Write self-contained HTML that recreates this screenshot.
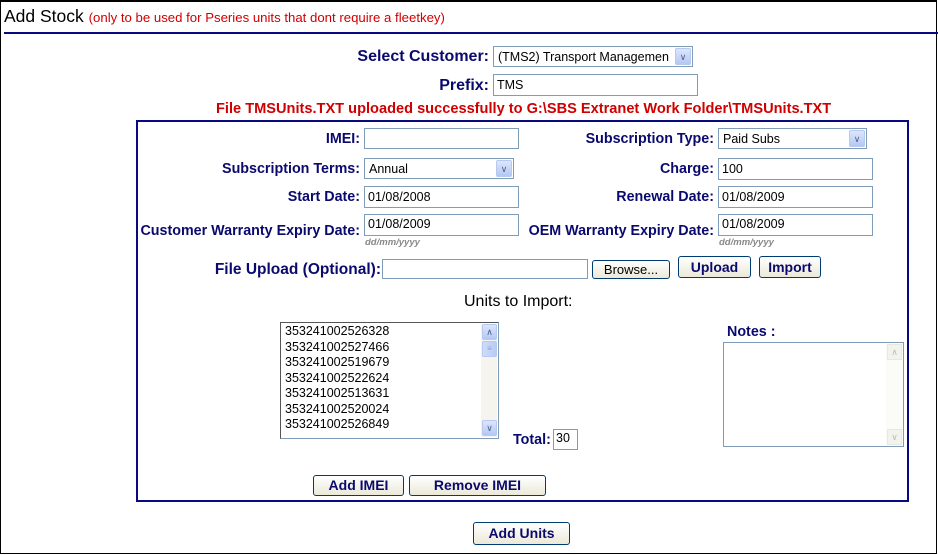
<!DOCTYPE html>
<html><head><style>
*{box-sizing:border-box;margin:0;padding:0}
body{width:938px;height:555px;background:#fff;font-family:"Liberation Sans",Arial,sans-serif;position:relative;overflow:hidden}
.a{position:absolute;white-space:nowrap}
.outer{left:0;top:0;width:937px;height:554px;border:1px solid #000;border-top:2px solid #000}
.lbl{color:#0a0a6e;font-weight:bold;font-size:14.3px;text-align:right}
.inp{border:1px solid #7f9db9;background:#fff;font-size:12.5px;padding:3px 3px 2px;color:#000;line-height:15px}
.sel{border:1px solid #7f9db9;background:#fff;font-size:12.5px;padding:3px 4px 2px;color:#000;line-height:15px}
.sel .ar{position:absolute;right:1px;top:1px;bottom:1px;width:16px;background:linear-gradient(#dce6fb,#b4c8f5);border:1px solid #b7c9f0;border-radius:2px;color:#4d6185;font-size:9px;text-align:center;line-height:17px;padding:0}
.btn{border:1px solid #003c74;border-radius:3px;background:linear-gradient(#fff,#ece9d8);color:#0a0a6e;font-weight:bold;font-size:14px;text-align:center}
.btn2{border:1px solid #003c74;border-radius:3px;background:linear-gradient(#fff,#ece9d8);color:#000;font-size:13px;text-align:center}
.hint{color:#888;font-size:9.5px;font-weight:bold;font-style:italic}
</style></head><body>
<div class="a outer"></div>
<div class="a" style="left:4px;top:6px;font-size:17.5px;color:#000">Add Stock <span style="font-size:13.2px;color:#d00000">(only to be used for Pseries units that dont require a fleetkey)</span></div>
<div class="a" style="left:4px;top:32px;width:934px;height:2px;background:#0a0a80"></div>

<div class="a lbl" style="right:449px;top:48px;font-size:16px">Select Customer:</div>
<div class="a sel" style="left:493px;top:46px;width:200px;height:21px">(TMS2) Transport Managemen<div class="ar">&#8744;</div></div>
<div class="a lbl" style="right:449px;top:77px;font-size:16px">Prefix:</div>
<div class="a inp" style="left:493px;top:74px;width:205px;height:22px">TMS</div>
<div class="a" style="left:216px;top:101px;color:#d00000;font-weight:bold;font-size:14.6px">File TMSUnits.TXT uploaded successfully to G:\SBS Extranet Work Folder\TMSUnits.TXT</div>

<div class="a" style="left:136px;top:120px;width:773px;height:382px;border:2px solid #0a0a80"></div>

<div class="a lbl" style="right:578px;top:131px">IMEI:</div>
<div class="a inp" style="left:364px;top:128px;width:155px;height:21px"></div>
<div class="a lbl" style="right:224px;top:131px">Subscription Type:</div>
<div class="a sel" style="left:718px;top:128px;width:149px;height:21px">Paid Subs<div class="ar">&#8744;</div></div>

<div class="a lbl" style="right:578px;top:161px">Subscription Terms:</div>
<div class="a sel" style="left:364px;top:158px;width:150px;height:21px">Annual<div class="ar">&#8744;</div></div>
<div class="a lbl" style="right:224px;top:161px">Charge:</div>
<div class="a inp" style="left:718px;top:158px;width:155px;height:22px">100</div>

<div class="a lbl" style="right:578px;top:189px">Start Date:</div>
<div class="a inp" style="left:364px;top:186px;width:155px;height:22px">01/08/2008</div>
<div class="a lbl" style="right:224px;top:189px">Renewal Date:</div>
<div class="a inp" style="left:718px;top:186px;width:155px;height:22px">01/08/2009</div>

<div class="a lbl" style="right:578px;top:223px">Customer Warranty Expiry Date:</div>
<div class="a inp" style="left:364px;top:214px;width:155px;height:22px;padding-top:2px">01/08/2009</div>
<div class="a hint" style="left:365px;top:237px">dd/mm/yyyy</div>
<div class="a lbl" style="right:224px;top:223px">OEM Warranty Expiry Date:</div>
<div class="a inp" style="left:718px;top:214px;width:155px;height:22px;padding-top:2px">01/08/2009</div>
<div class="a hint" style="left:719px;top:237px">dd/mm/yyyy</div>

<div class="a lbl" style="right:557px;top:261px;font-size:15.5px">File Upload (Optional):</div>
<div class="a inp" style="left:382px;top:259px;width:206px;height:20px"></div>
<div class="a btn2" style="left:592px;top:260px;width:78px;height:19px;line-height:17px">Browse...</div>
<div class="a btn" style="left:678px;top:256px;width:73px;height:22px;line-height:20px">Upload</div>
<div class="a btn" style="left:759px;top:256px;width:62px;height:22px;line-height:20px">Import</div>

<div class="a" style="left:464px;top:293px;font-size:16px;color:#000">Units to Import:</div>

<div class="a" style="left:280px;top:322px;width:219px;height:117px;border:1px solid #7f9db9;border-left-color:#555;border-top-color:#555;font-size:12.5px;line-height:15.5px;padding:1px 4px;color:#000">353241002526328<br>353241002527466<br>353241002519679<br>353241002522624<br>353241002513631<br>353241002520024<br>353241002526849</div>
<div class="a" style="left:481px;top:324px;width:16px;height:113px;background:#f5f4ee"></div>
<div class="a" style="left:482px;top:324px;width:15px;height:16px;background:linear-gradient(#dce6fb,#b4c8f5);border:1px solid #b7c9f0;border-radius:2px;font-size:9px;color:#4d6185;text-align:center;line-height:14px">&#8743;</div>
<div class="a" style="left:482px;top:341px;width:15px;height:16px;background:linear-gradient(90deg,#cfdcfa,#b9cbf5);border:1px solid #b7c9f0;border-radius:2px;font-size:8px;color:#8aa0d0;text-align:center;line-height:13px">≡</div>
<div class="a" style="left:482px;top:420px;width:15px;height:16px;background:linear-gradient(#dce6fb,#b4c8f5);border:1px solid #b7c9f0;border-radius:2px;font-size:9px;color:#4d6185;text-align:center;line-height:15px">&#8744;</div>

<div class="a lbl" style="left:513px;top:432px;text-align:left">Total:</div>
<div class="a inp" style="left:553px;top:429px;width:25px;height:21px;padding:1px 2px">30</div>

<div class="a lbl" style="left:727px;top:324px;text-align:left">Notes :</div>
<div class="a" style="left:723px;top:342px;width:181px;height:105px;border:1px solid #7f9db9;background:#fff"></div>
<div class="a" style="left:886px;top:343px;width:17px;height:103px;background:#fbfbf8"></div>
<div class="a" style="left:887px;top:344px;width:15px;height:16px;border:1px solid #e8e8e0;font-size:9px;color:#bbb;text-align:center;line-height:14px;background:#f3f3ee">&#8743;</div>
<div class="a" style="left:887px;top:429px;width:15px;height:16px;border:1px solid #e8e8e0;font-size:9px;color:#bbb;text-align:center;line-height:14px;background:#f3f3ee">&#8744;</div>

<div class="a btn" style="left:313px;top:475px;width:91px;height:21px;line-height:19px">Add IMEI</div>
<div class="a btn" style="left:409px;top:475px;width:137px;height:21px;line-height:19px">Remove IMEI</div>
<div class="a btn" style="left:473px;top:522px;width:97px;height:23px;line-height:21px">Add Units</div>
</body></html>
